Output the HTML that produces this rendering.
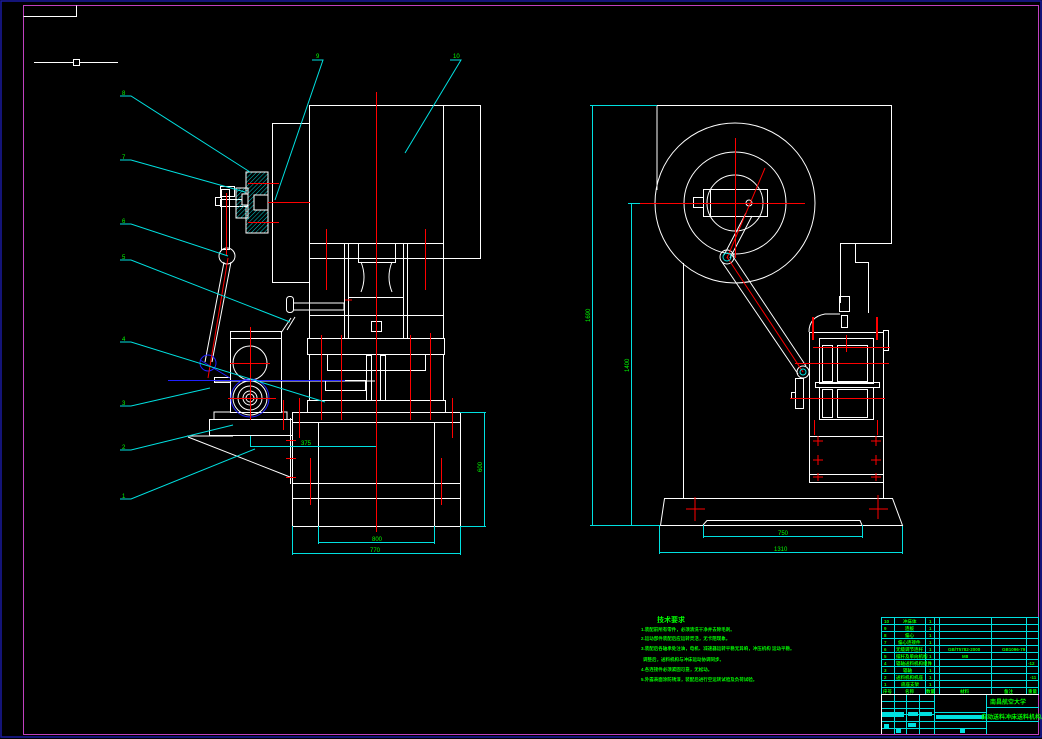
<!DOCTYPE html>
<html><head><meta charset="utf-8"><style>
html,body{margin:0;padding:0;background:#000;width:1042px;height:739px;overflow:hidden}
svg{display:block}
text{font-family:"Liberation Sans","Noto Sans CJK SC",sans-serif;fill:#00ff00}
</style></head><body>
<svg width="1042" height="739" viewBox="0 0 1042 739" xmlns="http://www.w3.org/2000/svg">
<defs>
<pattern id="h" width="3" height="3" patternUnits="userSpaceOnUse" patternTransform="rotate(45)"><line x1="0" y1="0" x2="0" y2="3" stroke="#00cccc" stroke-width="1"/></pattern>
</defs>
<rect x="1" y="1" width="1040" height="736" fill="none" stroke="#1a1aa0" stroke-width="1.5"/>
<rect x="23.5" y="5.5" width="1015" height="729" fill="none" stroke="#c040c0" stroke-width="1"/>
<polyline points="23.5,16.5 76.5,16.5 76.5,5.5" fill="none" stroke="#fff"/>
<line x1="34" y1="62.5" x2="118" y2="62.5" stroke="#fff"/>
<rect x="73.5" y="59.5" width="6" height="6" fill="#000" stroke="#fff"/>

<!-- LEFT VIEW -->
<g fill="none" stroke="#fff" stroke-width="1">
<rect x="309.5" y="105.5" width="171" height="153"/>
<line x1="443.5" y1="105" x2="443.5" y2="338"/>
<rect x="272.5" y="123.5" width="37" height="159"/>
<line x1="309" y1="243.5" x2="443" y2="243.5"/>
<line x1="344.5" y1="243" x2="344.5" y2="338"/><line x1="348.5" y1="243" x2="348.5" y2="338"/>
<line x1="403.5" y1="243" x2="403.5" y2="338"/><line x1="407.5" y1="243" x2="407.5" y2="338"/>
<rect x="358.5" y="243.5" width="37" height="19"/>
<path d="M361,262 q6,15 0,30 M392,262 q-6,15 0,30"/>
<line x1="348" y1="297.5" x2="403" y2="297.5"/>
<line x1="309" y1="315.5" x2="443" y2="315.5"/>
<line x1="309.5" y1="258" x2="309.5" y2="338"/>
<rect x="307.5" y="338.5" width="137" height="16"/>
<rect x="309.5" y="354.5" width="134" height="46"/>
<rect x="327.5" y="354.5" width="98" height="16"/>
<rect x="325.5" y="380.5" width="40" height="10"/>
<rect x="307.5" y="400.5" width="138" height="12"/>
<rect x="292.5" y="412.5" width="168" height="114"/>
<line x1="292" y1="422.5" x2="460" y2="422.5"/>
<line x1="292" y1="483.5" x2="460" y2="483.5"/>
<line x1="292" y1="498.5" x2="460" y2="498.5"/>
<line x1="318.5" y1="422" x2="318.5" y2="526"/><line x1="434.5" y1="422" x2="434.5" y2="526"/>
<!-- feeder -->
<rect x="230.5" y="331.5" width="51" height="81"/>
<line x1="230" y1="338.5" x2="281" y2="338.5"/>
<circle cx="250" cy="363" r="17"/>
<circle cx="250" cy="398" r="17"/><circle cx="250" cy="398" r="12"/><circle cx="250" cy="398" r="7"/><circle cx="250" cy="398" r="4"/>
<rect x="209.5" y="419.5" width="83" height="16"/>
<polyline points="214,419 214,412 230,412"/><polyline points="281,412 287,412 287,419"/>
<path d="M281,333 l10,-15 M287,330 l8,-13"/>
<rect x="286.5" y="296.5" width="7" height="16" rx="3"/>
<polyline points="293,303 344,303 344,310 293,310"/>
<!-- rod -->
<path d="M224,262 L205,362 M231,262 L212,362"/>
<circle cx="227" cy="256" r="8"/>
<rect x="221.5" y="189.5" width="8" height="60"/>
<rect x="220.5" y="186.5" width="14" height="10"/>
<rect x="215.5" y="197.5" width="6" height="8"/>
<rect x="220.5" y="199.5" width="27" height="7"/>
<!-- base diagonal -->
<polyline points="187,436 233,436"/>
<line x1="188" y1="437" x2="290" y2="477"/>
<line x1="290.5" y1="418" x2="290.5" y2="484"/>
<!-- die posts -->
<rect x="366.5" y="355.5" width="5" height="45"/><rect x="380.5" y="355.5" width="5" height="45"/>
<rect x="371.5" y="321.5" width="10" height="10"/>
<path d="M215,381 l160,0" stroke="#fff"/>
<rect x="214.5" y="377.5" width="16" height="5"/>
</g>
<!-- hub hatch -->
<rect x="246" y="172" width="22" height="61" fill="url(#h)" stroke="#fff"/>
<rect x="236" y="188" width="12" height="30" fill="url(#h)" stroke="#fff"/>
<rect x="254" y="195" width="14" height="15" fill="#000" stroke="#fff"/>
<rect x="242" y="194" width="6" height="11" fill="#000" stroke="#fff"/>
<!-- blue -->
<g fill="none" stroke="#2020ff">
<circle cx="208" cy="363" r="8"/>
<line x1="168" y1="380.5" x2="345" y2="380.5"/>
<circle cx="250" cy="398" r="19"/>
<path d="M200,360 l30,18"/>
</g>
<!-- red centerlines -->
<g stroke="#ff0000" stroke-width="1">
<line x1="376.5" y1="92" x2="376.5" y2="532"/>
<line x1="326.5" y1="229" x2="326.5" y2="290"/><line x1="425.5" y1="229" x2="425.5" y2="290"/>
<line x1="268" y1="202.5" x2="310" y2="202.5"/>
<line x1="248" y1="183.5" x2="279" y2="183.5"/><line x1="248" y1="222.5" x2="279" y2="222.5"/>
<line x1="226.5" y1="193" x2="226.5" y2="255"/>
<line x1="228" y1="258" x2="208" y2="378"/>
<line x1="250.5" y1="327" x2="250.5" y2="420"/>
<line x1="230" y1="363.5" x2="270" y2="363.5"/><line x1="228" y1="398.5" x2="276" y2="398.5"/>
<line x1="321.5" y1="335" x2="321.5" y2="420"/><line x1="430.5" y1="333" x2="430.5" y2="420"/>
<line x1="341.5" y1="335" x2="341.5" y2="420"/><line x1="410.5" y1="335" x2="410.5" y2="420"/>
<line x1="299.5" y1="398" x2="299.5" y2="438"/><line x1="452.5" y1="398" x2="452.5" y2="438"/>
<line x1="283.5" y1="400" x2="283.5" y2="430"/>
<line x1="310.5" y1="458" x2="310.5" y2="505"/><line x1="441.5" y1="458" x2="441.5" y2="505"/>
<line x1="286" y1="440.5" x2="296" y2="440.5"/><line x1="286" y1="458.5" x2="296" y2="458.5"/><line x1="286" y1="477.5" x2="296" y2="477.5"/>
<line x1="345" y1="300" x2="352" y2="300"/>
</g>
<!-- leaders cyan -->
<g stroke="#00e0e0" fill="none">
<polyline points="120,96 131,96 250,172"/>
<polyline points="120,160 131,160 245,192"/>
<polyline points="120,224 131,224 228,256"/>
<polyline points="120,260 131,260 290,322"/>
<polyline points="120,342 131,342 325,402"/>
<polyline points="120,406 131,406 210,388"/>
<polyline points="120,450 131,450 233,425"/>
<polyline points="120,499 131,499 255,449"/>
<polyline points="312,60 323,60 275,200"/>
<polyline points="450,60 461,60 405,153"/>
<polyline points="460,412.5 486,412.5"/><line x1="484.5" y1="412" x2="484.5" y2="526"/><line x1="460" y1="526.5" x2="486" y2="526.5"/>
<line x1="250.5" y1="436" x2="250.5" y2="447"/><line x1="250" y1="446.5" x2="376" y2="446.5"/>
<line x1="318.5" y1="526" x2="318.5" y2="544"/><line x1="434.5" y1="526" x2="434.5" y2="544"/><line x1="318" y1="542.5" x2="434" y2="542.5"/>
<line x1="292.5" y1="526" x2="292.5" y2="555"/><line x1="460.5" y1="526" x2="460.5" y2="555"/><line x1="292" y1="553.5" x2="460" y2="553.5"/>
</g>
<g font-size="6">
<text x="122" y="95">8</text><text x="122" y="159">7</text><text x="122" y="223">6</text><text x="122" y="259">5</text>
<text x="122" y="341">4</text><text x="122" y="405">3</text><text x="122" y="449">2</text><text x="122" y="498">1</text>
<text x="316" y="58">9</text><text x="453" y="58">10</text>
<text x="301" y="445">375</text><text x="372" y="541">800</text><text x="370" y="552">770</text>
<text x="482" y="472" transform="rotate(-90 482 472)">600</text>
</g>

<!-- RIGHT VIEW -->
<g fill="none" stroke="#fff">
<polyline points="657,190 657,105.5 891.5,105.5 891.5,243.5 840.5,243.5 840.5,303"/>
<polyline points="855.5,243 855.5,262.5 868.5,262.5 868.5,313"/>
<line x1="683.5" y1="263" x2="683.5" y2="498"/>
<line x1="883.5" y1="420" x2="883.5" y2="498"/>
<circle cx="735" cy="203" r="80"/>
<circle cx="735" cy="203" r="51"/>
<circle cx="735" cy="203" r="28"/>
<rect x="703.5" y="189.5" width="64" height="27"/>
<rect x="693.5" y="197.5" width="10" height="10"/>
<line x1="710.5" y1="190" x2="710.5" y2="216"/>
<circle cx="749" cy="203" r="3"/>
<path d="M724,255 L746,213 M730,258 L752,216"/>
<circle cx="727" cy="257" r="7"/>
<path d="M722,262 L798,374 M732,255 L806,366"/>
<circle cx="803" cy="372" r="6"/>
<polygon points="664.5,498.5 892.5,498.5 902.5,525.5 660.5,525.5"/>
<polyline points="703,525 707,520.5 860,520.5 862,525"/>
<path d="M809,332 q0,-15 16,-18 l15,0"/>
<rect x="809.5" y="332.5" width="74" height="150"/>
<rect x="819.5" y="338.5" width="54" height="45"/>
<rect x="822.5" y="345.5" width="10" height="36"/>
<rect x="837.5" y="345.5" width="30" height="36"/>
<rect x="815.5" y="382.5" width="64" height="5"/>
<rect x="819.5" y="387.5" width="54" height="32"/>
<rect x="822.5" y="389.5" width="10" height="28"/>
<rect x="837.5" y="389.5" width="30" height="28"/>
<line x1="809" y1="436.5" x2="883" y2="436.5"/>
<line x1="809" y1="474.5" x2="883" y2="474.5"/>
<rect x="839.5" y="296.5" width="10" height="15"/>
<rect x="841.5" y="315.5" width="6" height="12"/>
<rect x="795.5" y="378.5" width="8" height="30"/>
<rect x="791.5" y="392.5" width="4" height="6"/>
<rect x="883.5" y="330.5" width="5" height="20"/>
</g>
<g stroke="#ff0000">
<line x1="735.5" y1="138" x2="735.5" y2="258"/><line x1="636" y1="203.5" x2="805" y2="203.5"/>
<line x1="765" y1="168" x2="727" y2="258"/>
<line x1="727" y1="257" x2="803" y2="372"/>
<line x1="813" y1="317" x2="813" y2="340" stroke-width="2"/><line x1="877" y1="317" x2="877" y2="340" stroke-width="2"/>
<line x1="813" y1="347.5" x2="890" y2="347.5"/><line x1="795" y1="363.5" x2="889" y2="363.5"/><line x1="790" y1="398.5" x2="885" y2="398.5"/>
<line x1="846.5" y1="335" x2="846.5" y2="352"/>
<line x1="814.5" y1="420" x2="814.5" y2="435"/><line x1="877.5" y1="420" x2="877.5" y2="435"/>
<path d="M813,460 h10 M818,455 v10 M871,460 h10 M876,455 v10 M813,441 h10 M818,436 v10 M871,441 h10 M876,436 v10 M813,477 h10 M818,473 v8 M871,477 h10 M876,473 v8"/>
<path d="M686,509 h19 M695,497 v24 M869,509 h19 M878,495 v24"/>
</g>
<g stroke="#00e0e0" fill="none">
<line x1="590" y1="105.5" x2="657" y2="105.5"/><line x1="592.5" y1="105" x2="592.5" y2="525"/>
<line x1="628" y1="203.5" x2="640" y2="203.5"/><line x1="631.5" y1="203" x2="631.5" y2="525"/>
<line x1="590" y1="525.5" x2="660" y2="525.5"/>
<line x1="703.5" y1="525" x2="703.5" y2="538"/><line x1="862.5" y1="525" x2="862.5" y2="538"/><line x1="703" y1="536.5" x2="862" y2="536.5"/>
<line x1="659.5" y1="526" x2="659.5" y2="554"/><line x1="902.5" y1="526" x2="902.5" y2="554"/><line x1="659" y1="552.5" x2="902" y2="552.5"/>
<circle cx="727" cy="257" r="4"/><circle cx="803" cy="372" r="3"/>
</g>
<g font-size="6">
<text x="590" y="322" transform="rotate(-90 590 322)">1690</text>
<text x="629" y="372" transform="rotate(-90 629 372)">1400</text>
<text x="778" y="535">750</text><text x="774" y="551">1310</text>
</g>

<!-- NOTES -->
<g font-size="7" font-weight="bold">
<text x="657" y="622">技术要求</text>
</g>
<g font-size="4.5" font-weight="bold">
<text x="641" y="631">1.装配前所有零件，必须清洗干净并去除毛刺。</text>
<text x="641" y="640">2.运动部件装配后应运转灵活，无卡阻现象。</text>
<text x="641" y="650">3.装配后各轴承处注油，电机、减速器运转平稳无异响，冲压机构 运动平稳。</text>
<text x="643" y="661">调整后，送料机构与冲床运动协调同步。</text>
<text x="641" y="671">4.各连接件必须紧固可靠，无松动。</text>
<text x="641" y="681">5.外露表面涂防锈漆，装配后进行空运转试验及负荷试验。</text>
</g>

<!-- TITLE BLOCK -->
<g stroke="#00e0e0" fill="none" stroke-width="1">
<rect x="881.5" y="617.5" width="157" height="77"/>
<path d="M881,624.5 H1039 M881,631.5 H1039 M881,638.5 H1039 M881,645.5 H1039 M881,652.5 H1039 M881,659.5 H1039 M881,666.5 H1039 M881,673.5 H1039 M881,680.5 H1039 M881,687.5 H1039"/>
<path d="M894.5,617 V694 M925.5,617 V694 M934.5,617 V694 M939.5,617 V694 M991.5,617 V694 M1026.5,617 V694"/>
<path d="M986.5,694 V734 M986,707.5 H1039 M986,721.5 H1039"/>
<path d="M881,701.5 H934 M881,708.5 H934 M881,714.5 H934 M881,721.5 H986 M881,728.5 H986 M894.5,694 V734 M906.5,694 V734 M919.5,694 V734 M934.5,694 V734 M934,712.5 H986"/>
</g>
<line x1="881" y1="694.5" x2="1039" y2="694.5" stroke="#fff"/>
<line x1="881.5" y1="694" x2="881.5" y2="734" stroke="#fff"/>
<g fill="#00e0e0">
<rect x="882" y="712" width="22" height="5"/><rect x="908" y="712" width="10" height="4"/><rect x="920" y="712" width="12" height="4"/>
<rect x="936" y="715" width="48" height="4"/><rect x="884" y="724" width="5" height="4"/><rect x="896" y="729" width="5" height="4"/>
<rect x="908" y="723" width="8" height="4"/><rect x="960" y="728" width="5" height="5"/>
</g>
<g font-size="4.5" font-weight="bold">
<text x="884" y="623">10</text><text x="903" y="623">冲床体</text><text x="929" y="623">1</text>
<text x="884" y="630">9</text><text x="905" y="630">连板</text><text x="929" y="630">1</text>
<text x="884" y="637">8</text><text x="905" y="637">偏心</text><text x="929" y="637">1</text>
<text x="884" y="644">7</text><text x="898" y="644">偏心连接件</text><text x="929" y="644">1</text>
<text x="884" y="651">6</text><text x="896" y="651">无级调节连杆</text><text x="929" y="651">1</text><text x="948" y="651">GB/T5782-2000</text><text x="1002" y="651">GB1096-79</text>
<text x="884" y="658">5</text><text x="896" y="658">摆杆及单向机构</text><text x="929" y="658">1</text><text x="962" y="658">M8</text>
<text x="884" y="665">4</text><text x="896" y="665">辊轴送料机构组件</text><text x="929" y="665">1</text><text x="1028" y="665">-12</text>
<text x="884" y="672">3</text><text x="903" y="672">辊轴</text><text x="929" y="672">1</text>
<text x="884" y="679">2</text><text x="896" y="679">送料机构机座</text><text x="929" y="679">1</text><text x="1030" y="679">-11</text>
<text x="884" y="686">1</text><text x="901" y="686">底座支架</text><text x="929" y="686">1</text>
<text x="883" y="693">序号</text><text x="905" y="693">名称</text><text x="926" y="693">数量</text><text x="960" y="693">材料</text><text x="1004" y="693">备注</text><text x="1028" y="693">重量</text>
</g>
<g font-size="6" font-weight="bold">
<text x="990" y="704">南昌航空大学</text>
<text x="981" y="719">自动送料冲床送料机构总装配图</text>
</g>
</svg>
</body></html>
